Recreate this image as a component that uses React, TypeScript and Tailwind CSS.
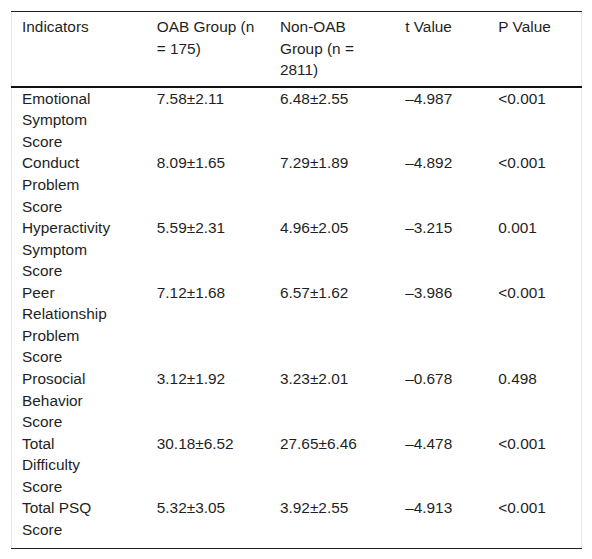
const rows = [
  ["Emotional Symptom Score", "7.58±2.11", "6.48±2.55", "–4.987", "<0.001"],
  ["Conduct Problem Score", "8.09±1.65", "7.29±1.89", "–4.892", "<0.001"],
  ["Hyperactivity Symptom Score", "5.59±2.31", "4.96±2.05", "–3.215", "0.001"],
  ["Peer Relationship Problem Score", "7.12±1.68", "6.57±1.62", "–3.986", "<0.001"],
  ["Prosocial Behavior Score", "3.12±1.92", "3.23±2.01", "–0.678", "0.498"],
  ["Total Difficulty Score", "30.18±6.52", "27.65±6.46", "–4.478", "<0.001"],
  ["Total PSQ Score", "5.32±3.05", "3.92±2.55", "–4.913", "<0.001"],
];

const pads = ["pl-[10px] pr-[33px]", "pl-[10px] pr-[9px]", "pl-[10px] pr-[15px]", "pl-[10px] pr-[10px]", "pl-[10px] pr-[10px]"];

export default function App() {
  return (
    <div className="w-[592px] h-[559px] bg-white pt-[11px] pl-[11px] font-['Liberation_Sans',Arial,sans-serif] text-[15.4px] leading-[21.56px] text-[#1f1f1f]">
      <table className="table-fixed w-[571px] border-collapse border-x border-x-[#e6e6e6]">
        <colgroup>
          <col className="w-[135px]" />
          <col className="w-[123px]" />
          <col className="w-[125px]" />
          <col className="w-[93px]" />
          <col className="w-[93px]" />
        </colgroup>
        <thead>
          <tr className="border-t border-t-[#222] border-b-2 border-b-[#111]">
            {["Indicators", "OAB Group (n = 175)", "Non-OAB Group (n = 2811)", "t Value", "P Value"].map((h, i) => (
              <th key={i} className={`${pads[i]} pt-[4px] pb-[5px] text-left align-top font-normal`}>
                {h}
              </th>
            ))}
          </tr>
        </thead>
        <tbody className="border-b border-b-[#222]">
          {rows.map((r, ri) => (
            <tr key={ri}>
              {r.map((c, ci) => (
                <td
                  key={ci}
                  className={`${pads[ci]} align-top ${ri === rows.length - 1 ? "pb-[7px]" : ""}`}
                >
                  {c}
                </td>
              ))}
            </tr>
          ))}
        </tbody>
      </table>
    </div>
  );
}
